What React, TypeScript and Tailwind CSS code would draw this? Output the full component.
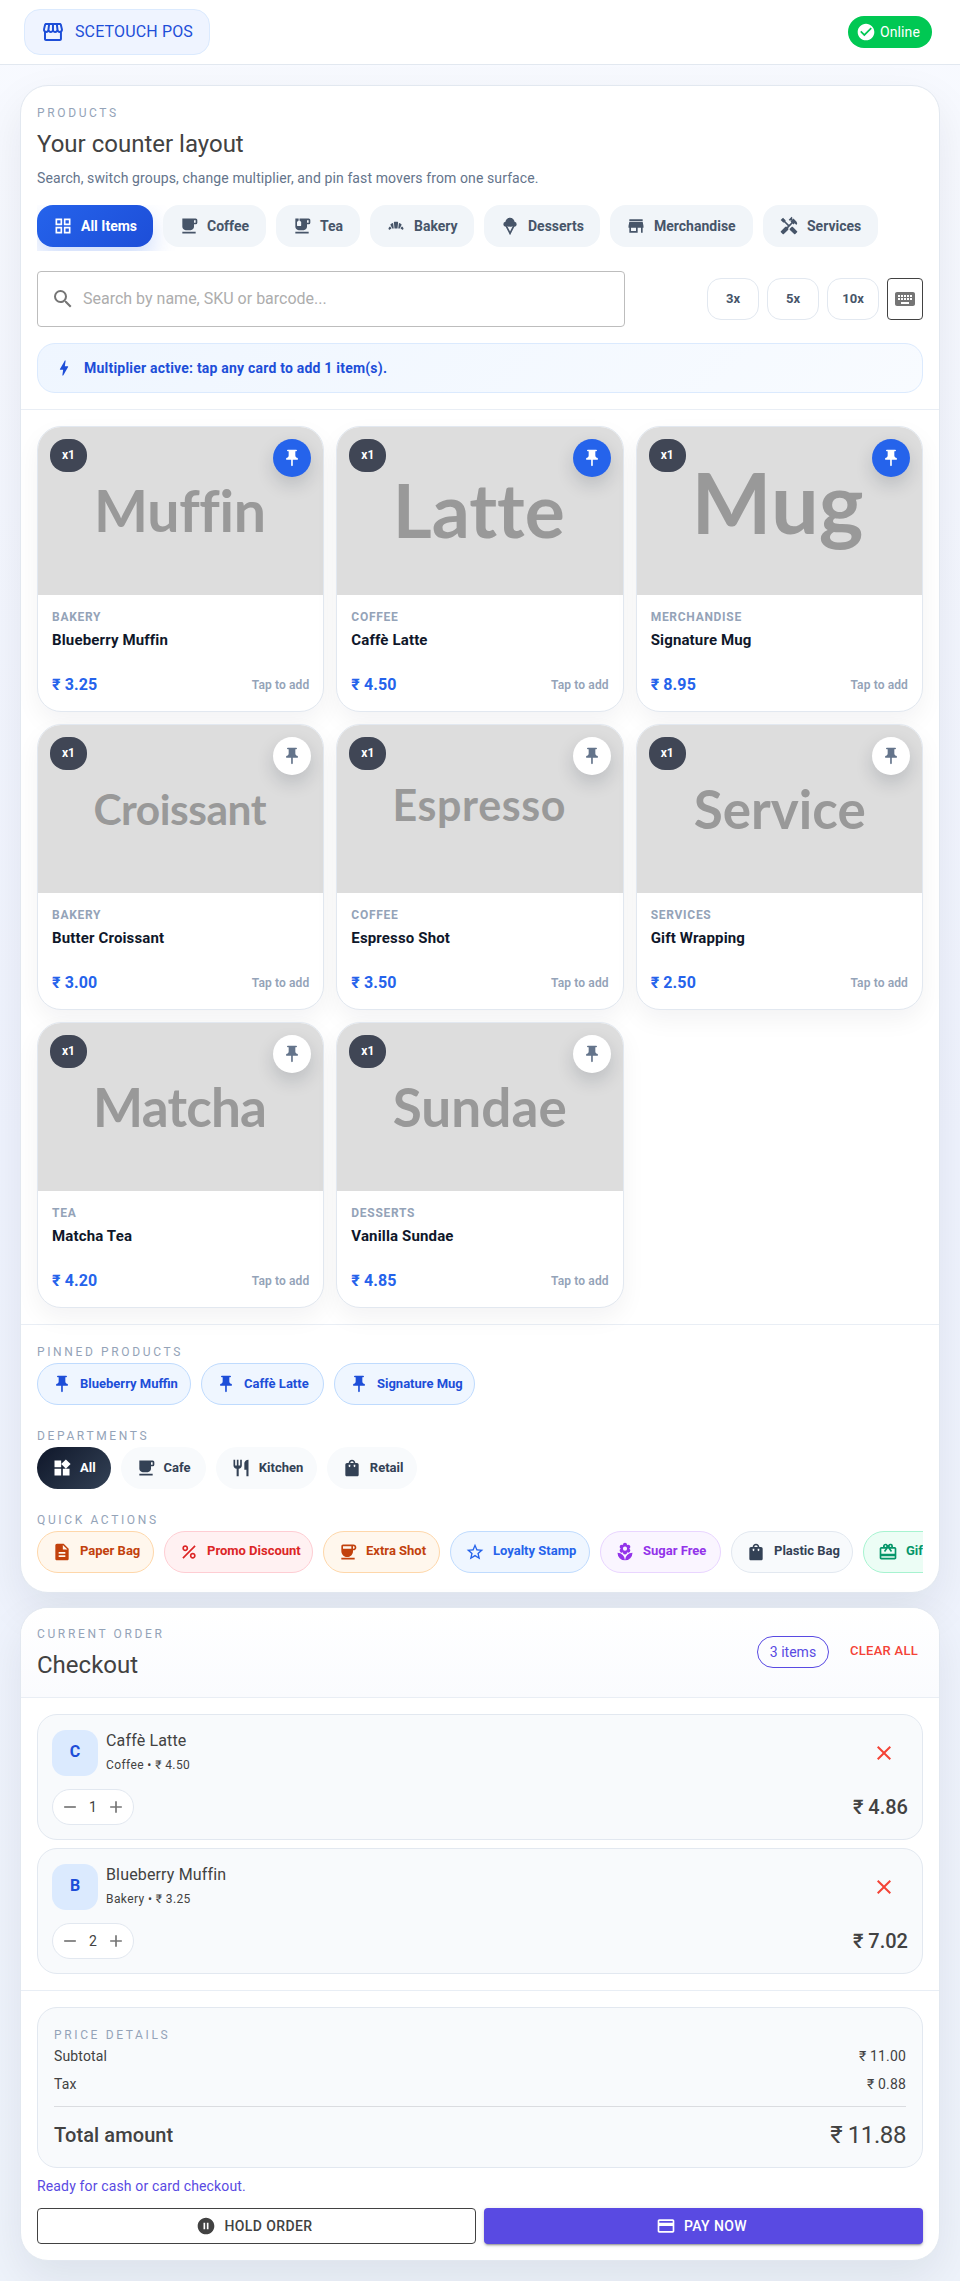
import React from "react";
import {
  MdOutlineStorefront, MdCheckCircle, MdGridView, MdCoffee, MdEmojiFoodBeverage, MdBakeryDining, MdIcecream,
  MdStore, MdHandyman, MdSearch, MdBolt, MdKeyboard, MdPushPin, MdWidgets, MdRestaurant, MdShoppingBag,
  MdDescription, MdPercent, MdStarOutline, MdLocalFlorist, MdCardGiftcard, MdPauseCircleFilled, MdPayment,
  MdClose, MdRemove, MdAdd, MdFreeBreakfast,
} from "react-icons/md";
import type { IconType } from "react-icons";

const categories: { label: string; icon: IconType; width: string }[] = [
  { label: "All Items", icon: MdGridView, width: "w-[116px]" },
  { label: "Coffee", icon: MdFreeBreakfast, width: "w-[103px]" },
  { label: "Tea", icon: MdEmojiFoodBeverage, width: "w-[84px]" },
  { label: "Bakery", icon: MdBakeryDining, width: "w-[104px]" },
  { label: "Desserts", icon: MdIcecream, width: "w-[116px]" },
  { label: "Merchandise", icon: MdStore, width: "w-[143px]" },
  { label: "Services", icon: MdHandyman, width: "w-[115px]" },
];

type Product = {
  art: string; size: number; x: number; baseline: number; length: number;
  group: string; name: string; price: string; pinned?: boolean;
};

const products: Product[] = [
  { art: "Muffin", size: 57.2, x: 142, baseline: 105, length: 172, group: "Bakery", name: "Blueberry Muffin", price: "3.25", pinned: true },
  { art: "Latte", size: 75, x: 141.7, baseline: 110.7, length: 172, group: "Coffee", name: "Caffè Latte", price: "4.50", pinned: true },
  { art: "Mug", size: 84.7, x: 140.5, baseline: 107, length: 172, group: "Merchandise", name: "Signature Mug", price: "8.95", pinned: true },
  { art: "Croissant", size: 42.5, x: 142, baseline: 100, length: 173, group: "Bakery", name: "Butter Croissant", price: "3.00" },
  { art: "Espresso", size: 43, x: 142, baseline: 96, length: 173, group: "Coffee", name: "Espresso Shot", price: "3.50" },
  { art: "Service", size: 53, x: 142.7, baseline: 103.5, length: 172, group: "Services", name: "Gift Wrapping", price: "2.50" },
  { art: "Matcha", size: 53, x: 142, baseline: 104, length: 174, group: "Tea", name: "Matcha Tea", price: "4.20" },
  { art: "Sundae", size: 53, x: 142.7, baseline: 104, length: 174, group: "Desserts", name: "Vanilla Sundae", price: "4.85" },
];

const pinned = [
  { label: "Blueberry Muffin", width: "w-[154px]" },
  { label: "Caffè Latte", width: "w-[123px]" },
  { label: "Signature Mug", width: "w-[141px]" },
];

const departments: { label: string; icon: IconType; width: string }[] = [
  { label: "All", icon: MdWidgets, width: "w-[73.5px]" },
  { label: "Cafe", icon: MdFreeBreakfast, width: "w-[85.3px]" },
  { label: "Kitchen", icon: MdRestaurant, width: "w-[101px]" },
  { label: "Retail", icon: MdShoppingBag, width: "w-[90px]" },
];

const actions: { label: string; icon: IconType; look: string }[] = [
  { label: "Paper Bag", icon: MdDescription, look: "w-[117px] bg-[#fff7ed] border-[#fed7aa] text-[#c2410c]" },
  { label: "Promo Discount", icon: MdPercent, look: "w-[149px] bg-[#fff1f2] border-[#fecdd3] text-[#dc2626]" },
  { label: "Extra Shot", icon: MdCoffee, look: "w-[117px] bg-[#fff7ed] border-[#fed7aa] text-[#c2410c]" },
  { label: "Loyalty Stamp", icon: MdStarOutline, look: "w-[140px] bg-[#eff6ff] border-[#bfdbfe] text-[#2563eb]" },
  { label: "Sugar Free", icon: MdLocalFlorist, look: "w-[121px] bg-[#faf5ff] border-[#e9d5ff] text-[#9333ea]" },
  { label: "Plastic Bag", icon: MdShoppingBag, look: "w-[122px] bg-[#f8fafc] border-[#e2e8f0] text-[#334155]" },
  { label: "Gift Card", icon: MdCardGiftcard, look: "w-[117px] bg-[#ecfdf5] border-[#a7f3d0] text-[#059669]" },
];

const lines = [
  { initial: "C", name: "Caffè Latte", note: "Coffee • ₹ 4.50", qty: 1, total: "4.86" },
  { initial: "B", name: "Blueberry Muffin", note: "Bakery • ₹ 3.25", qty: 2, total: "7.02" },
];

function Overline({ children }: { children: React.ReactNode }) {
  return <div className="text-[12px] leading-[18px] tracking-[2.64px] text-[#94a3b8] uppercase">{children}</div>;
}

function ProductCard({ p }: { p: Product }) {
  return (
    <article className="relative h-[286px] overflow-hidden rounded-[24px] border border-[#e2e8f0] bg-white shadow-[0_10px_24px_rgba(15,23,42,0.05)]">
      <div className="h-[168px] bg-[#dddddd]">
        <svg className="h-full w-full [font-variant-ligatures:none]" viewBox="0 0 285.33 168">
          <text x={p.x} y={p.baseline} textAnchor="middle" fontFamily="Lato" fontWeight="700" fontSize={p.size} textLength={p.length} fill="#999999">
            {p.art}
          </text>
        </svg>
      </div>
      <div className="absolute top-3 left-3 flex h-[33px] w-[37px] items-center justify-center rounded-[16px] bg-[rgba(15,23,42,0.76)] pb-px text-[12px] font-bold text-white">
        x1
      </div>
      <div className={`absolute top-3 right-3 flex size-[38px] items-center justify-center rounded-full shadow-[0_8px_18px_rgba(15,23,42,0.16)] ${p.pinned ? "bg-[#2563eb] text-white" : "bg-white text-[#64748b]"}`}>
        <MdPushPin size={20} />
      </div>
      <div className="flex flex-col px-[14px] pt-[13px]">
        <div className="text-[12px] leading-[18px] font-bold tracking-[0.72px] text-[#94a3b8] uppercase">{p.group}</div>
        <div className="mt-1 text-[15px] leading-[20px] font-bold tracking-[0.15px] text-[#0f172a]">{p.name}</div>
        <div className="mt-[23px] flex h-[24px] items-center justify-between">
          <span className="text-[16px] font-bold tracking-[0.12px] text-[#2563eb]">₹ {p.price}</span>
          <span className="text-[12px] font-semibold tracking-[0.12px] text-[#94a3b8]">Tap to add</span>
        </div>
      </div>
    </article>
  );
}

function LineItem({ line }: { line: (typeof lines)[number] }) {
  return (
    <div className="flex h-[126px] flex-col rounded-[20px] border border-[#e2e8f0] bg-[#f8fafc] p-[14px]">
      <div className="flex h-12 items-center gap-2">
        <div className="flex size-[46px] items-center justify-center rounded-[14px] bg-[#dbeafe] pb-[3px] text-[16px] font-bold text-[#1d4ed8]">
          {line.initial}
        </div>
        <div className="flex-1 pb-px">
          <div className="text-[16px] leading-[22px] tracking-[0.15px]">{line.name}</div>
          <div className="pt-[3px] text-[12px] leading-[20px] tracking-[0.4px]">{line.note}</div>
        </div>
        <div className="flex size-12 items-center justify-center text-[#f44336]">
          <MdClose size={24} />
        </div>
      </div>
      <div className="mt-3 flex items-center justify-between">
        <div className="flex h-9 w-[82px] items-center justify-between rounded-full border border-[#e2e8f0] bg-white px-[7px] text-[#757575]">
          <MdRemove size={20} />
          <span className="text-[14px] text-[#424242]">{line.qty}</span>
          <MdAdd size={20} />
        </div>
        <span className="text-[20px] font-medium">₹ {line.total}</span>
      </div>
    </div>
  );
}

const panel = "overflow-hidden rounded-[28px] border border-[#e2e8f0] bg-white shadow-[0_18px_45px_rgba(15,23,42,0.08)]";
const pill = "flex h-[42px] shrink-0 items-center gap-2 rounded-full border pl-[14px] text-[13px] font-bold whitespace-nowrap";

export default function App() {
  return (
    <div className="h-[2281px] w-[960px] overflow-hidden bg-[linear-gradient(180deg,#f8faff_0%,#eff3fe_50%,#eef3fb_100%)] font-['Roboto',sans-serif] text-[#424242]">
      <header className="flex h-[65px] items-center justify-between border-b border-[#e2e8f0] bg-white pr-7 pl-6">
        <div className="flex h-[46px] w-[186px] items-center gap-[10px] rounded-[16px] border border-[#dbeafe] bg-[#eff4ff] px-4 text-[#1d4ed8]">
          <MdOutlineStorefront size={24} />
          <span className="text-[16px] tracking-[0.15px] whitespace-nowrap">SCETOUCH POS</span>
        </div>
        <div className="flex h-8 w-[84px] items-center gap-1 rounded-full bg-[#00c853] pl-2 text-[14px] tracking-[0.1px] text-white">
          <MdCheckCircle size={20} />
          <span>Online</span>
        </div>
      </header>

      <main className="flex flex-col gap-[14px] p-5">
        <section className={`${panel} h-[1508px]`}>
          <div className="h-[324px] border-b border-[#e9eef5] px-4 pt-[18px]">
            <Overline>Products</Overline>
            <h1 className="mt-[6px] text-[24px] leading-[32px]">Your counter layout</h1>
            <p className="mt-2 text-[14px] leading-[20px] tracking-[0.11px] text-[#64748b]">
              Search, switch groups, change multiplier, and pin fast movers from one surface.
            </p>
            <div className="mt-[17px] flex h-[46px] gap-[10px] overflow-hidden">
              {categories.map((c, i) => (
                <div
                  key={c.label}
                  className={`flex h-[42px] shrink-0 items-center gap-2 rounded-[16px] pl-4 text-[14px] font-bold whitespace-nowrap ${c.width} ${
                    i === 0
                      ? "bg-[linear-gradient(135deg,#2563eb,#1d4ed8)] text-white shadow-[0_12px_24px_rgba(37,99,235,0.22)]"
                      : "bg-[#f1f5f9] text-[#475569]"
                  }`}
                >
                  <c.icon size={20} />
                  {c.label}
                </div>
              ))}
            </div>
            <div className="mt-5 flex items-center justify-between">
              <div className="flex h-14 w-[588px] items-center gap-2 rounded-[4px] border border-[#bdbdbd] pl-[13px] text-[#757575]">
                <MdSearch size={24} />
                <span className="text-[16px] text-[#adadad]">Search by name, SKU or barcode...</span>
              </div>
              <div className="flex gap-2">
                {["3x", "5x", "10x"].map((m) => (
                  <div key={m} className="flex h-[42px] w-[52px] items-center justify-center rounded-[14px] border border-[#e2e8f0] text-[13px] font-bold text-[#475569]">
                    {m}
                  </div>
                ))}
                <div className="flex h-[42px] w-9 items-center justify-center rounded-[4px] border border-[#424242] text-[#757575]">
                  <MdKeyboard size={24} />
                </div>
              </div>
            </div>
            <div className="mt-4 flex h-[50px] items-center gap-[10px] rounded-[18px] border border-[#dbeafe] bg-[linear-gradient(135deg,#eff6ff,#f8fbff)] pl-4 text-[14px] font-bold tracking-[0.21px] text-[#1d4ed8]">
              <MdBolt size={20} />
              Multiplier active: tap any card to add 1 item(s).
            </div>
          </div>

          <div className="grid h-[915px] grid-cols-3 content-start gap-3 border-b border-[#e9eef5] px-4 pt-4">
            {products.map((p) => (
              <ProductCard key={p.name} p={p} />
            ))}
          </div>

          <div className="px-4 pt-[18px]">
            <Overline>Pinned products</Overline>
            <div className="mt-[2px] flex gap-[10px]">
              {pinned.map((p) => (
                <div key={p.label} className={`${pill} ${p.width} border-[#bfdbfe] bg-[#eff6ff] text-[#1d4ed8]`}>
                  <MdPushPin size={20} />
                  {p.label}
                </div>
              ))}
            </div>
            <div className="mt-[22px]">
              <Overline>Departments</Overline>
            </div>
            <div className="mt-[2px] flex gap-[10px]">
              {departments.map((d, i) => (
                <div
                  key={d.label}
                  className={`${pill} ${d.width} border-transparent ${
                    i === 0 ? "bg-[linear-gradient(135deg,#0f172a,#334155)] bg-origin-border text-white" : "bg-[#f8fafc] text-[#334155]"
                  }`}
                >
                  <d.icon size={20} />
                  {d.label}
                </div>
              ))}
            </div>
            <div className="mt-[22px]">
              <Overline>Quick actions</Overline>
            </div>
            <div className="mt-[2px] flex gap-[10px] overflow-hidden">
              {actions.map((a) => (
                <div key={a.label} className={`${pill} ${a.look}`}>
                  <a.icon size={20} />
                  <span className="pb-[2px]">{a.label}</span>
                </div>
              ))}
            </div>
          </div>
        </section>

        <section className={`${panel} h-[654px]`}>
          <div className="flex h-[90px] justify-between border-b border-[#e9eef5] bg-[linear-gradient(180deg,#ffffff,#fafbfe)] px-4 pt-[17px]">
            <div>
              <Overline>Current order</Overline>
              <h2 className="mt-[6px] text-[24px] leading-[32px]">Checkout</h2>
            </div>
            <div className="mt-[11px] flex h-8 items-center">
              <div className="flex h-8 w-[72px] items-center justify-center rounded-full border border-[#594ae2] text-[14px] text-[#594ae2]">3 items</div>
              <div className="ml-[21px] w-[73px] pb-[2px] text-[13px] font-medium tracking-[0.28px] whitespace-nowrap text-[#f44336]">CLEAR ALL</div>
            </div>
          </div>

          <div className="flex h-[293px] flex-col gap-2 border-b border-[#e9eef5] px-4 pt-4">
            {lines.map((l) => (
              <LineItem key={l.name} line={l} />
            ))}
          </div>

          <div className="px-4 pt-4">
            <div className="h-[161px] rounded-[20px] border border-[#e2e8f0] bg-[#f8fafc] px-4 pt-[18px]">
              <Overline>Price details</Overline>
              <div className="mt-[2px] flex justify-between text-[14px] leading-[20px] tracking-[0.15px]">
                <span>Subtotal</span>
                <span>₹ 11.00</span>
              </div>
              <div className="mt-2 flex justify-between text-[14px] leading-[20px] tracking-[0.15px]">
                <span>Tax</span>
                <span>₹ 0.88</span>
              </div>
              <div className="mt-3 h-px bg-[#dadce0]" />
              <div className="mt-3 flex h-8 items-center justify-between">
                <span className="text-[20px] font-medium tracking-[0.1px]">Total amount</span>
                <span className="text-[24px] tracking-[-0.4px]">₹ 11.88</span>
              </div>
            </div>
            <p className="mt-2 text-[14px] leading-[20px] tracking-[0.15px] text-[#594ae2]">Ready for cash or card checkout.</p>
            <div className="mt-3 grid grid-cols-2 gap-2 text-[14px] font-medium tracking-[0.4px]">
              <div className="flex h-9 items-center justify-center gap-2 rounded-[4px] border border-[#424242]">
                <MdPauseCircleFilled size={20} className="-ml-1" />
                HOLD ORDER
              </div>
              <div className="flex h-9 items-center justify-center gap-2 rounded-[4px] bg-[#594ae2] text-white shadow-[0_3px_1px_-2px_rgba(0,0,0,0.2),0_2px_2px_rgba(0,0,0,0.14),0_1px_5px_rgba(0,0,0,0.12)]">
                <MdPayment size={20} className="-ml-1" />
                PAY NOW
              </div>
            </div>
          </div>
        </section>
      </main>
    </div>
  );
}
